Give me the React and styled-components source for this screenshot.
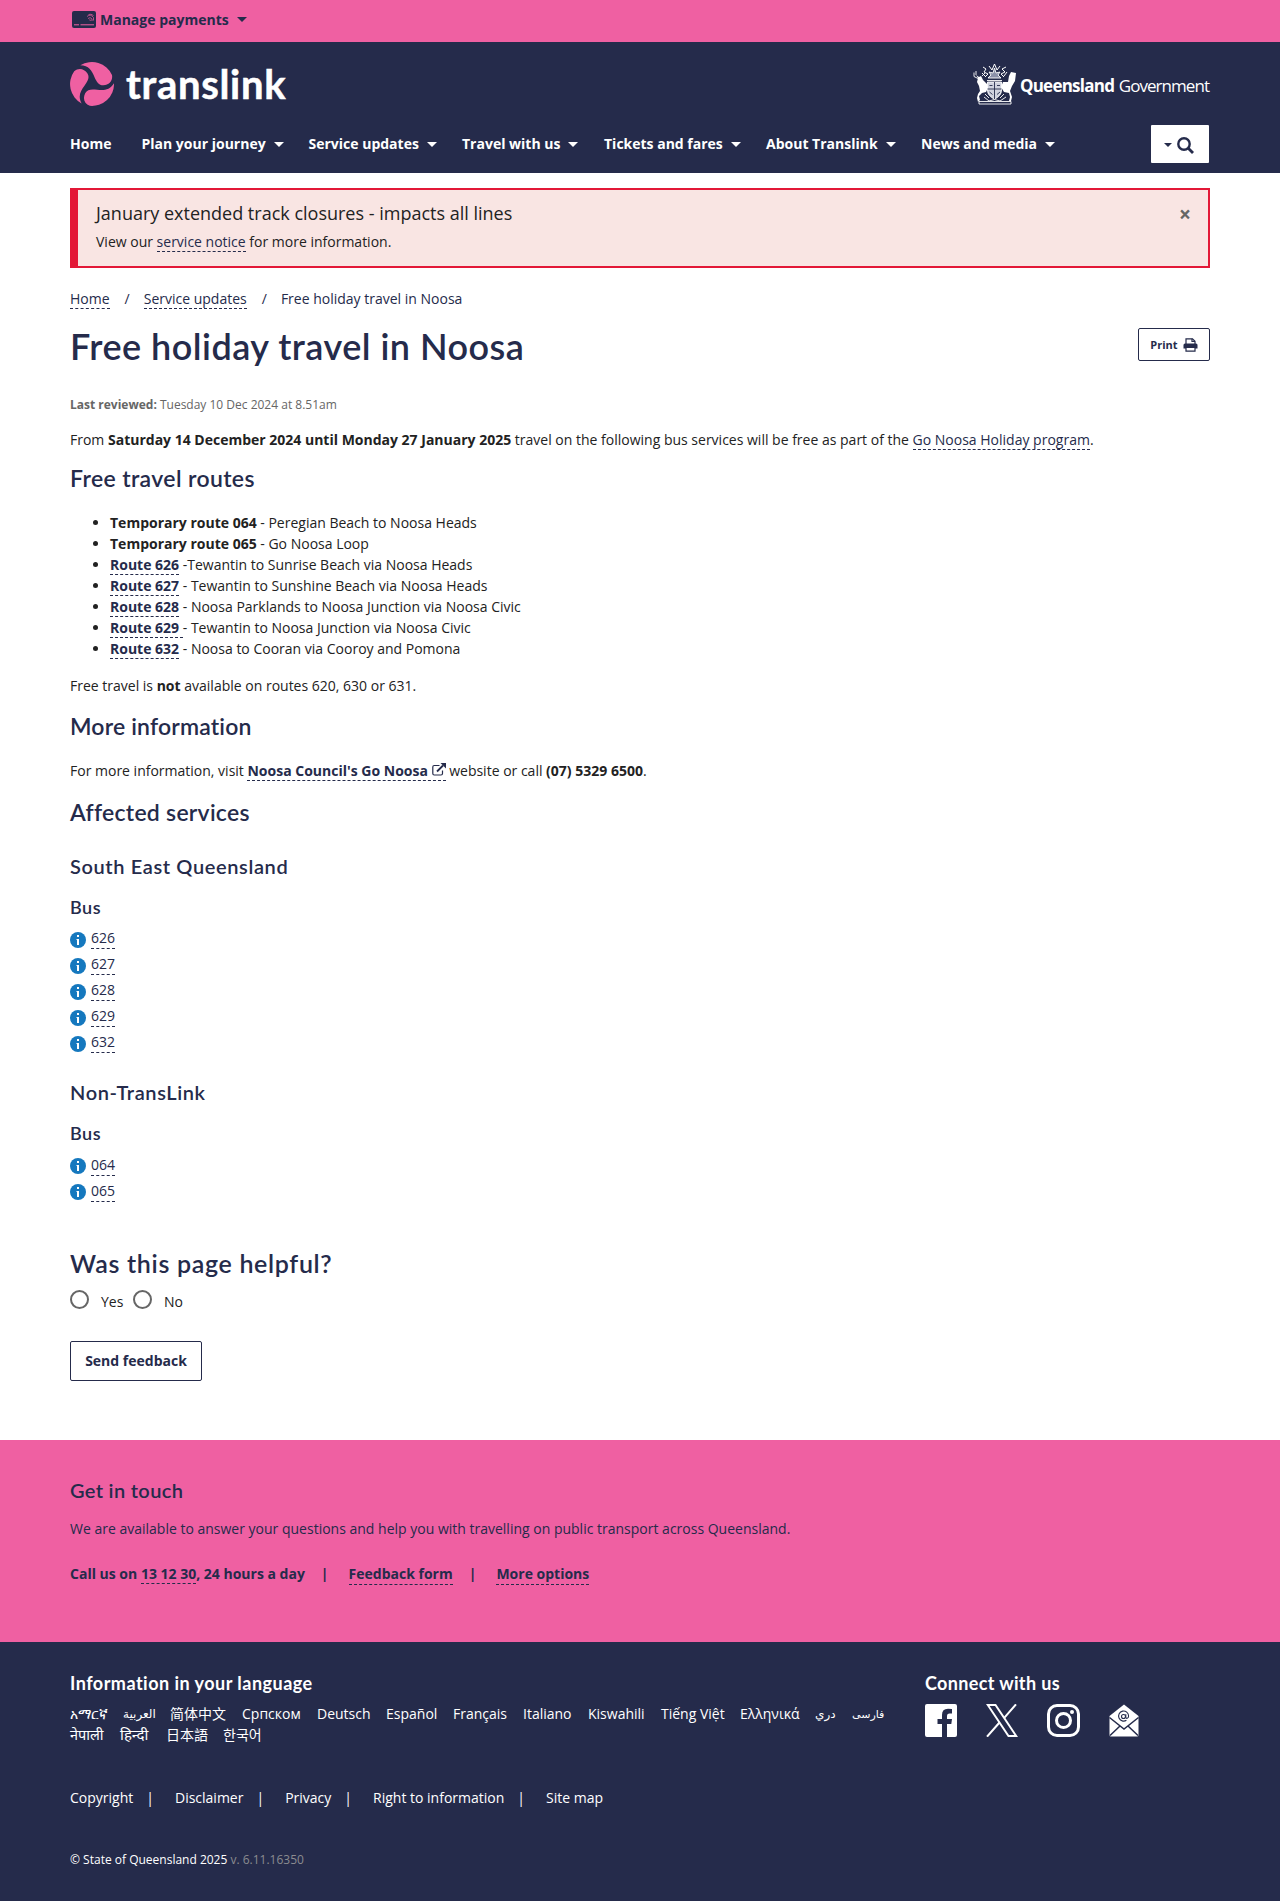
import React from "react";
import styled, { createGlobalStyle } from "styled-components";

const NAVY = "#252b4b";
const PINK = "#ef60a2";

const Global = createGlobalStyle`
  * { box-sizing: border-box; }
  body { margin: 0; background: #fff; color: #222; font: 14px/20px "Open Sans", "Noto Sans", "DejaVu Sans", "Noto Sans CJK SC", sans-serif; }
  h1, h2, h3, h4, p, ul { margin: 0; padding: 0; }
`;

const Container = styled.div`
  width: 1140px;
  margin: 0 auto;
`;

const TopBar = styled.div`
  height: 42px;
  background: ${PINK};
`;
const Payments = styled(Container)`
  display: flex;
  align-items: center;
  height: 39px;
  padding-left: 2px;
  color: ${NAVY};
  font-weight: 700;
`;
const PaymentsLabel = styled.span`
  margin: 0 8px 0 4px;
`;
const Caret = styled.span`
  width: 0;
  height: 0;
  border: ${(p) => p.$w || 5}px solid transparent;
  border-bottom: 0;
  border-top-color: currentColor;
`;

const Header = styled.header`
  height: 131px;
  background: ${NAVY};
  color: #fff;
`;
const Brand = styled(Container)`
  display: flex;
  justify-content: space-between;
  height: 83px;
  padding: 20px 1px 0 0;
`;
const Logo = styled.div`
  display: flex;
`;
const Wordmark = styled.span`
  margin-left: 12px;
  font: 700 40px/45px Lato, sans-serif;
  letter-spacing: 0.7px;
  -webkit-text-stroke: 0.5px #fff;
`;
const Gov = styled.div`
  display: flex;
  font-size: 17px;
  line-height: 24px;
  svg { margin-top: 1px; }
`;
const GovText = styled.span`
  margin: 12px 0 0 ${(p) => p.$left}px;
  font-weight: ${(p) => (p.$bold ? 700 : 400)};
  letter-spacing: ${(p) => p.$ls}px;
`;
const NavRow = styled(Container)`
  display: flex;
  justify-content: space-between;
`;
const NavList = styled.nav`
  display: flex;
  padding-top: 9px;
`;
const NavItem = styled.a`
  display: flex;
  align-items: center;
  height: 20px;
  width: ${(p) => p.$width}px;
  font-weight: 700;
  gap: 8px;
  white-space: nowrap;
`;
const SearchBtn = styled.button`
  display: flex;
  align-items: center;
  gap: 5px;
  width: 58px;
  height: 38px;
  padding: 2px 0 0 13px;
  margin-right: 1px;
  border: 0;
  border-radius: 1px;
  background: #fff;
  color: ${NAVY};
`;

const Alert = styled.div`
  display: flex;
  justify-content: space-between;
  height: 80px;
  margin-top: 15px;
  padding: 10px 17px 0 18px;
  border: 2px solid #e31837;
  border-left-width: 8px;
  background: #f9e5e3;
`;
const AlertTitle = styled.p`
  font-size: 18px;
  line-height: 27px;
  margin-bottom: 5px;
`;
const Close = styled.span`
  font-weight: 700;
  font-size: 21px;
  line-height: 28px;
  color: #666;
`;
const Link = styled.a`
  color: ${NAVY};
  border-bottom: 1px dashed ${NAVY};
  font-weight: ${(p) => (p.$bold ? 700 : "inherit")};
`;
const Crumbs = styled.div`
  display: flex;
  margin-top: 21px;
  height: 20px;
  color: ${NAVY};
  & > ${Link} { height: 20px; }
`;
const Slash = styled.span`
  margin: 0 14px 0 15px;
`;
const TitleRow = styled.div`
  display: flex;
  justify-content: space-between;
  margin-top: 16px;
`;
const H1 = styled.h1`
  padding-top: 1px;
  font: 600 36px/40px Lato, sans-serif;
  letter-spacing: 0.48px;
  color: ${NAVY};
`;
const PrintBtn = styled.button`
  display: flex;
  align-items: center;
  justify-content: center;
  gap: 5px;
  width: 72px;
  height: 33px;
  margin-top: 3px;
  border: 1px solid ${NAVY};
  border-radius: 2px;
  background: #fff;
  color: ${NAVY};
  font: 700 11px/16px "Open Sans", sans-serif;
`;
const Heading = styled.div`
  margin: ${(p) => p.$top + 1}px 0 -1px;
  font: ${(p) => p.$weight || 600} ${(p) => p.$size}px/${(p) => p.$lh}px Lato, sans-serif;
  letter-spacing: ${(p) => p.$ls || 0}px;
  font-variant-ligatures: none;
  color: ${(p) => p.$color || NAVY};
`;
const Reviewed = styled.p`
  margin-top: 30px;
  font-size: 12px;
  line-height: 18px;
  color: #666;
`;
const Para = styled.p`
  margin-top: ${(p) => p.$top}px;
`;
const Routes = styled.ul`
  margin-top: 21px;
  padding-left: 40px;
  line-height: 21px;
`;
const Services = styled.ul`
  margin-top: ${(p) => p.$top}px;
  list-style: none;
`;
const Service = styled.li`
  display: flex;
  align-items: flex-start;
  gap: 5px;
  height: 26px;
  svg { margin-top: ${(p) => p.$icon}px; }
`;
const RadioRow = styled.div`
  display: flex;
  margin-top: 12px;
  height: 22px;
`;
const Radio = styled.span`
  width: 19px;
  height: 19px;
  border: 2px solid #666;
  border-radius: 50%;
`;
const RadioLabel = styled.label`
  width: 44px;
  padding: 2px 0 0 12px;
`;
const SendBtn = styled.button`
  display: block;
  width: 132px;
  height: 40px;
  margin-top: 29px;
  padding: 0;
  border: 1px solid ${NAVY};
  border-radius: 2px;
  background: #fff;
  color: ${NAVY};
  font: 700 14px/20px "Open Sans", sans-serif;
`;
const Touch = styled.section`
  height: 202px;
  margin-top: 59px;
  padding-top: 36px;
  background: ${PINK};
  color: ${NAVY};
`;
const TouchBody = styled(Container)`
  padding-top: 1px;
`;
const Contact = styled.div`
  display: flex;
  margin-top: 25px;
  font-weight: 700;
`;
const Pipe = styled.span`
  margin: 0 ${(p) => p.$r}px 0 ${(p) => p.$l}px;
`;
const Footer = styled.footer`
  height: 259px;
  background: ${NAVY};
  color: #fff;
`;
const FooterCols = styled(Container)`
  display: grid;
  grid-template-columns: 855px 1fr;
  padding-top: 29px;
`;
const Langs = styled.div`
  display: flex;
  flex-wrap: wrap;
  width: 830px;
  margin-top: 10px;
  line-height: 21px;
`;
const Lang = styled.span`
  width: ${(p) => p.$w}px;
  height: 21px;
  white-space: nowrap;
  font-size: ${(p) => p.$size || 14}px;
`;
const Social = styled.div`
  display: flex;
  margin-top: 11px;
  gap: 29px;
`;
const FooterLinks = styled(Container)`
  display: flex;
  margin-top: 43px;
`;
const Copy = styled(Container)`
  margin-top: 43px;
  font-size: 12px;
  line-height: 18px;
`;
const Version = styled.span`
  color: #8b8b90;
`;

const nav = [
  ["Home", 71.5, false],
  ["Plan your journey", 167, true],
  ["Service updates", 153.5, true],
  ["Travel with us", 142, true],
  ["Tickets and fares", 162, true],
  ["About Translink", 155, true],
  ["News and media", 140, true],
];
const langs = [
  ["አማርኛ", 53], ["العربية", 47, 12], ["简体中文", 72], ["Српском", 75], ["Deutsch", 69], ["Español", 67], ["Français", 70],
  ["Italiano", 65], ["Kiswahili", 73], ["Tiếng Việt", 79], ["Ελληνικά", 75], ["دري", 37, 12], ["فارسی", 33, 11],
  ["नेपाली", 50, 14.5], ["हिन्दी", 46, 15], ["日本語", 57], ["한국어", 42],
];
const routes = [
  ["Temporary route 064", " - Peregian Beach to Noosa Heads", false],
  ["Temporary route 065", " - Go Noosa Loop", false],
  ["Route 626", " -Tewantin to Sunrise Beach via Noosa Heads", true],
  ["Route 627", " - Tewantin to Sunshine Beach via Noosa Heads", true],
  ["Route 628", " - Noosa Parklands to Noosa Junction via Noosa Civic", true],
  ["Route 629\u00a0", "- Tewantin to Noosa Junction via Noosa Civic", true],
  ["Route 632", " - Noosa to Cooran via Cooroy and Pomona", true],
];

const Swirl = () => (
  <svg width="44" height="44" viewBox="-66 -66 132 132" fill={PINK}>
    {[0, 120, 240].map((a) => (
      <path key={a} transform={`rotate(${a})`} d="M-35-56A66 66 0 0 1 60-27C63-10 52 3 34 4 20 4 14-6 7-22 0-39-10-56-35-56Z" />
    ))}
  </svg>
);
const Card = () => (
  <svg width="24" height="17" viewBox="0 0 24 17">
    <rect width="24" height="17" rx="2" fill={NAVY} />
    <path d="M2 13.800h5M8.500 13.800h13.500" stroke={PINK} strokeWidth="1" />
    <path d="M15 5.500q3.500-3 6.500 1v3M16 7.500q2.200-2 4 .5v2M17.300 9q1-.8 1.500.8M16.500 3.500q2.500-1 5 1" fill="none" stroke={PINK} strokeWidth=".7" />
  </svg>
);
const Arms = () => (
  <svg width="44" height="42" viewBox="0 0 44 42" fill="none" stroke="#fff" strokeWidth=".9">
    <path d="M3 12l3 2 2-1 2 4 4 4 1 4-2 4-4 1-3 3 1 4-2 2-1-4 1-4 2-3-1-5-2-4 1-4z" fill="#fff" stroke="none" />
    <path d="M1 9.500v4l4 2M3 8v4M9 13l3-3" />
    <path d="M43 10l-5-1-2 4-1 6-5 0-2 5 3 5 5 1 1 4-1 4 2 0 1-4-2-6 2-5 3-5z" fill="#fff" stroke="none" />
    <path d="M14.500 19h14v8c0 4-3 7.500-7 9-4-1.500-7-5-7-9z" fill="#d0d3df" />
    <path d="M14.500 26h14M21.500 19v17M16.500 22.500h3M24 22.500h3M16.500 29l3 2.500M27 29l-3 2.500" stroke={NAVY} />
    <path d="M14 17.500h15M15 15l3-3-2-3 4 1 1.500-5L23 10l4-1-2 3 3 3z" fill="#8b90a8" />
    <path d="M10 4l3 2-2 3 4 2-3 3M33 4l-4 2 3 3-4 2 3 3M16 3l3 4 2.500-6L24 7l3-4M9 10l3 3M34 9l-3 4" strokeWidth="1" />
    <path d="M6 38.500h32v2.500H6zM11 34l5 4 5.500-1.500L27 38l6-4M12 31l4 4M31 31l-4 4" />
  </svg>
);
const Info = () => (
  <svg width="16" height="16" viewBox="0 0 16 16">
    <circle cx="8" cy="8" r="8" fill="#1578be" />
    <path d="M7 3h2v2H7zM6.500 7H9v6H7V8h-.5z" fill="#fff" />
  </svg>
);
const External = () => (
  <svg width="14" height="13" viewBox="0 0 14 13" fill="none" stroke={NAVY} strokeWidth="1.200">
    <path d="M7.500 2.500H2.200Q.8 2.500.8 4v6.500q0 1.500 1.400 1.500h6.800q1.500 0 1.500-1.500V7.500" />
    <path d="M5 8.500l6-6" strokeWidth="1.800" />
    <path d="M8.500 0H14v5.500z" fill={NAVY} stroke="none" />
  </svg>
);
const Search = () => (
  <svg width="17" height="17" viewBox="0 0 17 17" fill="none" stroke={NAVY} strokeWidth="2.400">
    <circle cx="7" cy="7" r="5.700" />
    <path d="M11 11l5 5" strokeWidth="2.800" />
  </svg>
);
const Printer = () => (
  <svg width="15" height="14" viewBox="0 0 15 14" fill="none" stroke={NAVY} strokeWidth="1.200">
    <path d="M3 6V.8h6.500L12 3.200V6" fill="#fff" />
    <path d="M9 .8v2.700h3" />
    <path d="M2 5.500h11q1.500 0 1.500 1.500v3.500H.5V7Q.5 5.500 2 5.500z" fill={NAVY} stroke="none" />
    <path d="M3 9.500h9v3.700H3z" fill="#fff" />
  </svg>
);
const Facebook = () => (
  <svg width="32" height="33" viewBox="0 0 32 33" fill="#fff">
    <path d="M2 0h28q2 0 2 2v29q0 2-2 2h-8V20h4.300l.7-5h-5v-3.200q0-2.300 2.500-2.300H27V5q-2-.3-4-.3-6 0-6 6.300v4h-4.500v5H17v13H2q-2 0-2-2V2q0-2 2-2z" />
  </svg>
);
const XLogo = () => (
  <svg width="32" height="33" viewBox="0 0 32 33" fill="none" stroke="#fff" strokeWidth="2">
    <path d="M1.800 1h7.700l20.700 31h-7.700z" />
    <path d="M30 .3L18 14.200M13.500 18.500L1 32.700" />
  </svg>
);
const Instagram = () => (
  <svg width="33" height="33" viewBox="0 0 33 33" fill="none" stroke="#fff" strokeWidth="3">
    <rect x="1.500" y="1.500" width="30" height="30" rx="8.500" />
    <circle cx="16.500" cy="16.500" r="7" />
    <circle cx="25" cy="8" r="2" fill="#fff" stroke="none" />
  </svg>
);
const Mail = () => (
  <svg width="30" height="33" viewBox="0 0 30 33">
    <path d="M.5 12L15 .5 29.500 12v19q0 1.500-1.500 1.500H2Q.5 32.500.5 31z" fill="#fff" />
    <path d="M.5 13.500L15 25l14.500-11.500M1 31.500l10-9.500M29 31.500L19 22" fill="none" stroke={NAVY} strokeWidth="1.500" />
    <circle cx="14.500" cy="12.500" r="2" fill="none" stroke={NAVY} strokeWidth="1.100" />
    <path d="M16.800 10.200v3q.2 1.400 1.400 1.100 1.400-.4 1.400-2.300a5 5 0 1 0-2.200 4.200" fill="none" stroke={NAVY} strokeWidth="1.100" />
  </svg>
);

export default function App() {
  return (
    <>
      <Global />
      <TopBar>
        <Payments><Card /><PaymentsLabel>Manage payments</PaymentsLabel><Caret /></Payments>
      </TopBar>
      <Header>
        <Brand>
          <Logo><Swirl /><Wordmark>translink</Wordmark></Logo>
          <Gov><Arms /><GovText $bold $left={3} $ls={-0.75}>Queensland</GovText><GovText $left={4.5} $ls={-0.95}>Government</GovText></Gov>
        </Brand>
        <NavRow>
          <NavList>
            {nav.map(([t, w, c]) => <NavItem key={t} $width={w}><span>{t}</span>{c && <Caret />}</NavItem>)}
          </NavList>
          <SearchBtn aria-label="Search"><Caret $w={4.5} /><Search /></SearchBtn>
        </NavRow>
      </Header>
      <Container>
        <Alert>
          <div>
            <AlertTitle>January extended track closures - impacts all lines</AlertTitle>
            <p>View our <Link>service notice</Link> for more information.</p>
          </div>
          <Close>×</Close>
        </Alert>
        <Crumbs><Link>Home</Link><Slash>/</Slash><Link>Service updates</Link><Slash>/</Slash><span>Free holiday travel in Noosa</span></Crumbs>
        <TitleRow>
          <H1>Free holiday travel in Noosa</H1>
          <PrintBtn><span>Print</span><Printer /></PrintBtn>
        </TitleRow>
        <Reviewed><b>Last reviewed:</b> Tuesday 10 Dec 2024 at 8.51am</Reviewed>
        <Para $top={16}>From <b>Saturday 14 December 2024 until Monday 27 January 2025</b> travel on the following bus services will be free as part of the <Link>Go Noosa Holiday program</Link>.</Para>
        <Heading as="h2" $top={13} $size={23} $lh={28} $ls={0.37}>Free travel routes</Heading>
        <Routes>
          {routes.map(([a, b, l]) => <li key={a}>{l ? <Link $bold>{a}</Link> : <b>{a}</b>}{b}</li>)}
        </Routes>
        <Para $top={17}>Free travel is <b>not</b> available on routes 620, 630 or 631.</Para>
        <Heading as="h2" $top={15} $size={23} $lh={28} $ls={0.17}>More information</Heading>
        <Para $top={22}>For more information, visit <Link $bold>Noosa Council's Go Noosa <External /></Link> website or call <b>(07) 5329 6500</b>.</Para>
        <Heading as="h2" $top={16} $size={23} $lh={28} $ls={0.26}>Affected services</Heading>
        <Heading as="h3" $top={28} $size={20} $lh={24} $ls={0.62}>South East Queensland</Heading>
        <Heading as="h4" $top={18} $size={18} $lh={22} $ls={0.5}>Bus</Heading>
        <Services $top={11}>
          {["626", "627", "628", "629", "632"].map((s) => <Service key={s} $icon={4}><Info /><Link>{s}</Link></Service>)}
        </Services>
        <Heading as="h3" $top={21} $size={20} $lh={24} $ls={0.62}>Non-TransLink</Heading>
        <Heading as="h4" $top={18} $size={18} $lh={22} $ls={0.5}>Bus</Heading>
        <Services $top={12}>
          {["064", "065"].map((s) => <Service key={s} $icon={3}><Info /><Link>{s}</Link></Service>)}
        </Services>
        <Heading as="h2" $top={39} $size={25} $lh={32} $ls={0.68}>Was this page helpful?</Heading>
        <RadioRow><Radio /><RadioLabel>Yes</RadioLabel><Radio /><RadioLabel>No</RadioLabel></RadioRow>
        <SendBtn>Send feedback</SendBtn>
      </Container>
      <Touch>
        <TouchBody>
          <Heading as="h3" $top={0} $size={20} $lh={24} $ls={0.34}>Get in touch</Heading>
          <Para $top={18}>We are available to answer your questions and help you with travelling on public transport across Queensland.</Para>
          <Contact>
            <span>Call us on <Link>13 12 30</Link>, 24 hours a day</span><Pipe $l={16} $r={20}>|</Pipe>
            <Link>Feedback form</Link><Pipe $l={16} $r={20}>|</Pipe><Link>More options</Link>
          </Contact>
        </TouchBody>
      </Touch>
      <Footer>
        <FooterCols>
          <div>
            <Heading as="h4" $top={0} $size={18} $lh={22} $ls={0.48} $weight={700} $color="#fff">Information in your language</Heading>
            <Langs>{langs.map(([t, w, s]) => <Lang key={t} $w={w} $size={s}>{t}</Lang>)}</Langs>
          </div>
          <div>
            <Heading as="h4" $top={0} $size={18} $lh={22} $ls={0.35} $weight={700} $color="#fff">Connect with us</Heading>
            <Social><Facebook /><XLogo /><Instagram /><Mail /></Social>
          </div>
        </FooterCols>
        <FooterLinks>
          <span>Copyright</span><Pipe $l={13} $r={21}>|</Pipe>
          <span>Disclaimer</span><Pipe $l={13} $r={21}>|</Pipe>
          <span>Privacy</span><Pipe $l={13} $r={21}>|</Pipe>
          <span>Right to information</span><Pipe $l={13} $r={21}>|</Pipe>
          <span>Site map</span>
        </FooterLinks>
        <Copy>© State of Queensland 2025 <Version>v. 6.11.16350</Version></Copy>
      </Footer>
    </>
  );
}
